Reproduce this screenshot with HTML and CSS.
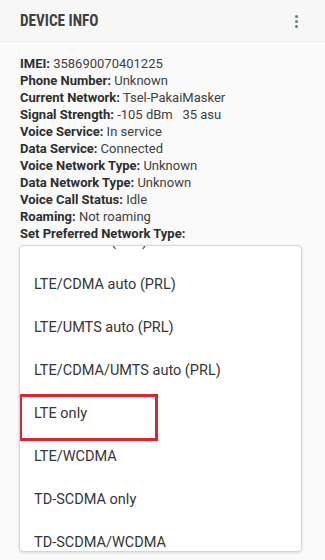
FILE: index.html
```html
<!DOCTYPE html>
<html>
<head>
<meta charset="utf-8">
<link rel="stylesheet" href="styles.css">
</head>
<body>
<header class="appbar">
  <h1 class="title">DEVICE INFO</h1>
  <div class="overflow"><span></span><span></span><span></span></div>
</header>
<main class="info">
  <div class="row"><b>IMEI:</b> 358690070401225</div>
  <div class="row"><b>Phone Number:</b> Unknown</div>
  <div class="row"><b>Current Network:</b> Tsel-PakaiMasker</div>
  <div class="row"><b>Signal Strength:</b> -105 dBm&nbsp;&nbsp; 35 asu</div>
  <div class="row"><b>Voice Service:</b> In service</div>
  <div class="row"><b>Data Service:</b> Connected</div>
  <div class="row"><b>Voice Network Type:</b> Unknown</div>
  <div class="row"><b>Data Network Type:</b> Unknown</div>
  <div class="row"><b>Voice Call Status:</b> Idle</div>
  <div class="row"><b>Roaming:</b> Not roaming</div>
  <div class="row"><b>Set Preferred Network Type:</b></div>
</main>
<div class="popup">
  <ul class="list">
    <li class="item">Global auto (PRL)</li>
    <li class="item">LTE/CDMA auto (PRL)</li>
    <li class="item">LTE/UMTS auto (PRL)</li>
    <li class="item">LTE/CDMA/UMTS auto (PRL)</li>
    <li class="item selected">LTE only<span class="mark"></span></li>
    <li class="item">LTE/WCDMA</li>
    <li class="item">TD-SCDMA only</li>
    <li class="item">TD-SCDMA/WCDMA</li>
  </ul>
</div>
</body>
</html>
```
FILE: styles.css
```css
html, body {
  margin: 0;
  padding: 0;
}
body {
  width: 325px;
  height: 560px;
  background: #fafafa;
  font-family: Roboto, "Liberation Sans", sans-serif;
  color: #3a3a3a;
  position: relative;
  overflow: hidden;
}
.appbar {
  height: 42px;
  box-sizing: border-box;
  display: flex;
  align-items: center;
  justify-content: space-between;
  padding: 0 27px 0 20px;
  background: #f7f7f7;
  border-bottom: 1px solid #efefef;
}
.title {
  margin: 0;
  font-family: "Liberation Sans Narrow", "Roboto Condensed", Roboto, sans-serif;
  font-weight: 700;
  font-size: 16px;
  color: #404040;
  transform: scaleX(0.95);
  transform-origin: left center;
}
.overflow {
  display: flex;
  flex-direction: column;
  gap: 2px;
  margin-top: 1px;
}
.overflow span {
  width: 3px;
  height: 3px;
  border-radius: 50%;
  background: #5d7c8c;
}
.info {
  padding: 13px 20px 0;
}
.row {
  font-size: 13px;
  line-height: 17px;
  color: #404040;
  white-space: nowrap;
}
.row b {
  font-weight: 700;
  color: #2e2e2e;
}
.popup {
  position: absolute;
  left: 19px;
  top: 245px;
  width: 283px;
  height: 307px;
  box-sizing: border-box;
  background: #fff;
  border: 1px solid #d6d6d6;
  border-radius: 4px;
  box-shadow: 0 1px 3px rgba(0,0,0,0.12);
  overflow: hidden;
}
.list {
  list-style: none;
  margin: -26px 0 0;
  padding: 0;
}
.item {
  position: relative;
  height: 43px;
  line-height: 43px;
  padding-left: 14px;
  font-size: 14.5px;
  color: #363636;
}
.mark {
  position: absolute;
  left: -1px;
  top: 2px;
  width: 139px;
  height: 47px;
  box-sizing: border-box;
  border: 3px solid #d9262f;
}
```
